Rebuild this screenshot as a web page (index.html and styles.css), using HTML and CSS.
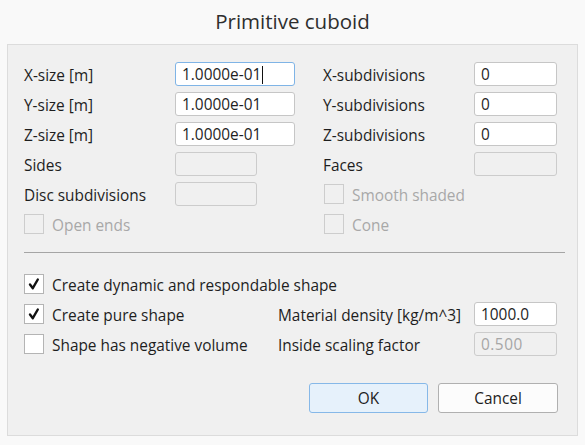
FILE: index.html
```html
<!DOCTYPE html>
<html>
<head>
<meta charset="utf-8">
<title>Primitive cuboid</title>
<link rel="stylesheet" href="styles.css">
</head>
<body>
<div class="title">Primitive cuboid</div>
<div class="panel">
  <div class="top-grid">
    <span class="label">X-size [m]</span>
    <div class="cell"><div class="input wide focused">1.0000e-01<span class="caret"></span></div></div>
    <span class="label">X-subdivisions</span>
    <div class="input">0</div>

    <span class="label">Y-size [m]</span>
    <div class="cell"><div class="input wide">1.0000e-01</div></div>
    <span class="label">Y-subdivisions</span>
    <div class="input">0</div>

    <span class="label">Z-size [m]</span>
    <div class="cell"><div class="input wide">1.0000e-01</div></div>
    <span class="label">Z-subdivisions</span>
    <div class="input">0</div>

    <span class="label">Sides</span>
    <div class="cell"><div class="input narrow disabled"></div></div>
    <span class="label">Faces</span>
    <div class="input disabled"></div>

    <span class="label">Disc subdivisions</span>
    <div class="cell"><div class="input narrow disabled"></div></div>
    <label class="check span2 off right"><span class="box"></span><span>Smooth shaded</span></label>

    <label class="check span2 off"><span class="box"></span><span>Open ends</span></label>
    <label class="check span2 off right"><span class="box"></span><span>Cone</span></label>
  </div>

  <div class="sep"></div>

  <div class="bottom-grid">
    <label class="check full"><span class="box"><svg viewBox="0 0 20 20" width="20" height="20"><polyline points="6,10.5 8.8,14.2 13.8,5.5" fill="none" stroke="#111" stroke-width="2.4" stroke-linecap="round" stroke-linejoin="round"/></svg></span><span>Create dynamic and respondable shape</span></label>

    <label class="check"><span class="box"><svg viewBox="0 0 20 20" width="20" height="20"><polyline points="6,10.5 8.8,14.2 13.8,5.5" fill="none" stroke="#111" stroke-width="2.4" stroke-linecap="round" stroke-linejoin="round"/></svg></span><span>Create pure shape</span></label>
    <span class="label">Material density [kg/m^3]</span>
    <div class="input">1000.0</div>

    <label class="check"><span class="box"></span><span>Shape has negative volume</span></label>
    <span class="label">Inside scaling factor</span>
    <div class="input disabled grey">0.500</div>
  </div>

  <div class="buttons">
    <button class="btn default">OK</button>
    <button class="btn">Cancel</button>
  </div>
</div>
</body>
</html>
```

FILE: styles.css
```css
html, body {
  margin: 0;
  padding: 0;
  background: #f9f9f9;
  font-family: "Open Sans", "Noto Sans", "Liberation Sans", sans-serif;
  color: #1e1e1e;
}

.title {
  height: 44px;
  line-height: 42px;
  text-align: center;
  font-size: 20.5px;
  color: #2e2e2e;
}

.panel {
  box-sizing: border-box;
  width: 571px;
  margin-left: 7px;
  background: #f0f0f0;
  border: 1px solid #dcdcdc;
  padding: 17px 20px 22px 16px;
  font-size: 15.4px;
}

.top-grid {
  display: grid;
  grid-template-columns: 151px 148px 151px 83px;
  grid-auto-rows: 24px;
  row-gap: 6px;
  align-items: center;
}

.bottom-grid {
  display: grid;
  grid-template-columns: 254px 196px 83px;
  grid-auto-rows: 24px;
  row-gap: 6px;
  align-items: center;
}

.label {
  white-space: nowrap;
  line-height: 24px;
  padding-top: 4px;
}

.cell {
  display: flex;
}

.input {
  box-sizing: border-box;
  height: 24px;
  background: #fff;
  border: 1px solid #c6c6c6;
  border-radius: 3px;
  padding-left: 6px;
  padding-top: 2px;
  line-height: 22px;
  display: flex;
  align-items: center;
  white-space: nowrap;
}

.input.wide { width: 120px; }
.input.narrow { width: 82px; }

.input.focused {
  border-color: #7fb4e6;
}

.caret {
  display: inline-block;
  width: 1px;
  height: 18px;
  background: #111;
  margin-left: 1px;
}

.input.disabled {
  background: #f0f0f0;
  border-color: #cccccc;
}

.input.grey {
  color: #a6a6a6;
  letter-spacing: 0.5px;
}

.check {
  display: flex;
  align-items: center;
  gap: 8px;
  white-space: nowrap;
  height: 24px;
}

.check > span:last-child {
  padding-top: 3px;
}

.check.span2 { grid-column: span 2; }
.check.full { grid-column: 1 / -1; }
.check.right { margin-left: 1px; }

.box {
  box-sizing: border-box;
  width: 20px;
  height: 20px;
  background: #fff;
  border: 1px solid #b4b4b4;
  display: flex;
  flex: none;
}

.box svg {
  margin: -1px;
}

.check.off {
  color: #a8a8a8;
}

.check.off .box {
  background: #f0f0f0;
  border-color: #cdcdcd;
}

.sep {
  height: 1px;
  background: #a5a5a5;
  margin: 16px -8px 19px 0;
}

.buttons {
  display: flex;
  justify-content: flex-end;
  gap: 10px;
  margin-top: 27px;
  margin-right: -1px;
}

.btn {
  box-sizing: border-box;
  width: 120px;
  height: 30px;
  font-family: inherit;
  font-size: 15.4px;
  color: #1e1e1e;
  background: #fcfcfc;
  border: 1px solid #b0b0b0;
  border-radius: 3px;
  padding: 0;
}

.btn.default {
  width: 119px;
  background: #e6f1fb;
  border-color: #86b8e8;
}
```
